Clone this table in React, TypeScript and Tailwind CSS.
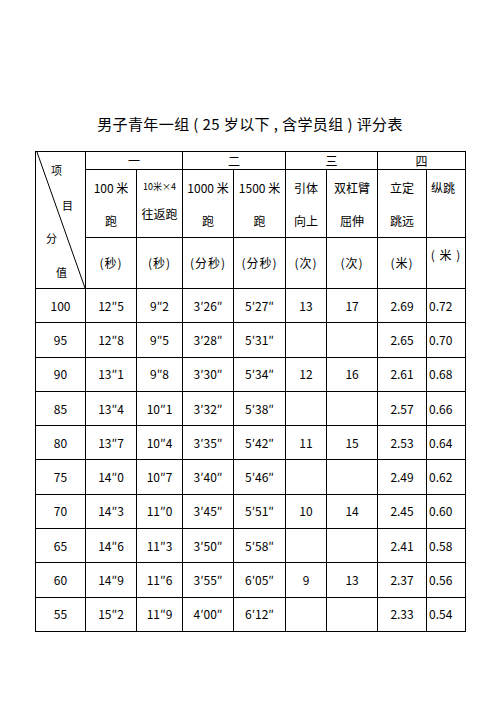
const rows = [
  ["100", "12″5", "9″2", "3′26″", "5′27″", "13", "17", "2.69", "0.72"],
  ["95", "12″8", "9″5", "3′28″", "5′31″", "", "", "2.65", "0.70"],
  ["90", "13″1", "9″8", "3′30″", "5′34″", "12", "16", "2.61", "0.68"],
  ["85", "13″4", "10″1", "3′32″", "5′38″", "", "", "2.57", "0.66"],
  ["80", "13″7", "10″4", "3′35″", "5′42″", "11", "15", "2.53", "0.64"],
  ["75", "14″0", "10″7", "3′40″", "5′46″", "", "", "2.49", "0.62"],
  ["70", "14″3", "11″0", "3′45″", "5′51″", "10", "14", "2.45", "0.60"],
  ["65", "14″6", "11″3", "3′50″", "5′58″", "", "", "2.41", "0.58"],
  ["60", "14″9", "11″6", "3′55″", "6′05″", "9", "13", "2.37", "0.56"],
  ["55", "15″2", "11″9", "4′00″", "6′12″", "", "", "2.33", "0.54"],
]

const widths = [50, 51, 46, 51, 52, 41, 51, 49, 39]

const names: [string, string][] = [
  ["100 米", "跑"],
  ["1000 米", "跑"],
  ["1500 米", "跑"],
  ["引体", "向上"],
  ["双杠臂", "屈伸"],
  ["立定", "跳远"],
]

const cell = "border border-black p-0 text-center align-middle"

export default function App() {
  return (
    <div
      className="min-h-[702px] w-[496px] bg-white pt-[114px] pl-[35px] text-black"
      style={{ fontFamily: '"Noto Sans CJK SC", "Noto Sans", sans-serif' }}
    >
      <h1 className="w-[430px] text-center text-[15px] leading-[20px] font-normal tracking-[0.4px]">
        男子青年一组 ( 25 岁以下 , 含学员组 ) 评分表
      </h1>

      <table className="mt-[17px] w-[430px] table-fixed border-collapse text-[12px]">
        <colgroup>
          {widths.map((w, i) => (
            <col key={i} style={{ width: w }} />
          ))}
        </colgroup>
        <tbody>
          <tr className="h-[18px]">
            <td rowSpan={3} className="relative border border-black p-0">
              <svg className="absolute inset-0 h-full w-full" preserveAspectRatio="none" viewBox="0 0 100 100">
                <line x1="2" y1="0" x2="100" y2="100" stroke="#000" strokeWidth="1" vectorEffect="non-scaling-stroke" />
              </svg>
              <span className="absolute left-[15px] top-[11px] text-[11px] leading-[14px]">项</span>
              <span className="absolute left-[26px] top-[46px] text-[11px] leading-[14px]">目</span>
              <span className="absolute left-[10px] top-[79px] text-[11px] leading-[14px]">分</span>
              <span className="absolute left-[20px] top-[113px] text-[11px] leading-[14px]">值</span>
            </td>
            <td colSpan={2} className={cell + " leading-none"}>一</td>
            <td colSpan={2} className={cell + " leading-none"}>二</td>
            <td colSpan={2} className={cell + " leading-none"}>三</td>
            <td colSpan={2} className={cell + " leading-none"}>四</td>
          </tr>
          <tr className="h-[68px]">
            <td className={cell}>
              <div className="leading-[33px]">{names[0][0]}</div>
              <div className="leading-[33px]">{names[0][1]}</div>
            </td>
            <td className={cell}>
              <div className="text-[9px] leading-[20px]">10米×4</div>
              <div className="leading-[33px]">往返跑</div>
            </td>
            {names.slice(1).map(([a, b]) => (
              <td key={a} className={cell}>
                <div className="leading-[33px]">{a}</div>
                <div className="leading-[33px]">{b}</div>
              </td>
            ))}
            <td className="border border-black p-0 pl-[4px] text-left align-middle">
              <div className="leading-[33px]">纵跳</div>
              <div className="leading-[33px]">&nbsp;</div>
            </td>
          </tr>
          <tr className="h-[51px]">
            {["(秒)", "(秒)", "(分秒)", "(分秒)", "(次)", "(次)", "(米)"].map((u, i) => (
              <td key={i} className={cell + " tracking-[1px]"}>{u}</td>
            ))}
            <td className={cell + " tracking-[1px]"}>
              <div className="-mt-[16px]">( 米 )</div>
            </td>
          </tr>
          {rows.map((r) => (
            <tr key={r[0]} className="h-[34.3px]">
              {r.map((v, i) => (
                <td
                  key={i}
                  className={
                    i === 8
                      ? "border border-black p-0 pl-[2px] text-left align-middle"
                      : cell
                  }
                >
                  {v}
                </td>
              ))}
            </tr>
          ))}
        </tbody>
      </table>
    </div>
  )
}
